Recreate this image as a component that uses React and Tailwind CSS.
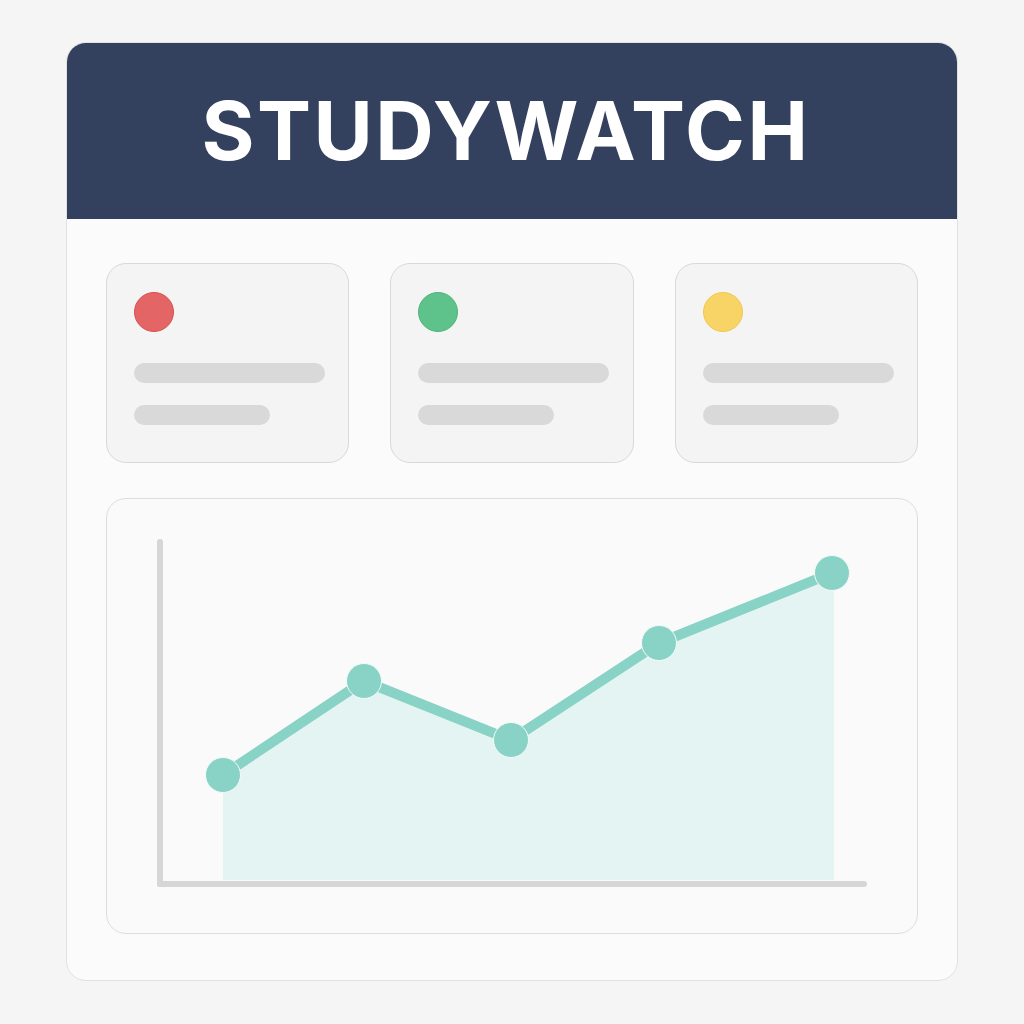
const cards = [
  { dot: 'bg-[#e46565] border-[#d94f4f]' },
  { dot: 'bg-[#5ec28b] border-[#4fb37c]' },
  { dot: 'bg-[#f8d467] border-[#f0c850]' },
];

const points = [
  [117, 277],
  [258, 183],
  [405, 242],
  [553, 145],
  [726, 75],
];

function StatCard({ dot }) {
  return (
    <div className="h-[200px] rounded-[20px] border border-[#d9d9d9] bg-[#f4f4f4] pl-[27px] pt-[28px]">
      <div className={`h-[40px] w-[40px] rounded-full border ${dot}`} />
      <div className="mt-[31px] h-[20px] w-[191px] rounded-full bg-[#d9d9d9]" />
      <div className="mt-[22px] h-[20px] w-[136px] rounded-full bg-[#d9d9d9]" />
    </div>
  );
}

function Chart() {
  const line = points.map((p) => p.join(',')).join(' ');
  const area = `117,382 ${line} 728,75 728,382`;
  return (
    <div className="h-[436px] rounded-[20px] border border-[#dedede] bg-[#fafafa]">
      <svg width="810" height="434" viewBox="1 1 810 434" className="block">
        <polygon points={area} fill="#e4f4f2" />
        <line x1="54" y1="44" x2="54" y2="386" stroke="#d6d6d6" strokeWidth="6" strokeLinecap="round" />
        <line x1="54" y1="386" x2="758" y2="386" stroke="#d6d6d6" strokeWidth="6" strokeLinecap="round" />
        <polyline points={line} fill="none" stroke="#88d3c5" strokeWidth="10" strokeLinejoin="round" />
        {points.map(([x, y], i) => (
          <circle key={i} cx={x} cy={y} r="17.5" fill="#88d3c5" stroke="#f4fbfa" strokeWidth="1" />
        ))}
      </svg>
    </div>
  );
}

export default function App() {
  return (
    <div className="min-h-[1024px] w-[1024px] bg-[#f5f5f5] pt-[42px] pl-[66px]" style={{ fontFamily: 'Inter, "Liberation Sans", sans-serif' }}>
      <div className="h-[939px] w-[892px] overflow-hidden rounded-[20px] border border-[#e2e2e2] bg-[#fbfbfb]">
        <div className="flex h-[176px] items-center justify-center bg-[#33405e] pr-[12px]">
          <h1 className="text-[81px] font-bold leading-none tracking-[2.5px] text-white">STUDYWATCH</h1>
        </div>
        <div className="px-[39px] pt-[44px]">
          <div className="grid grid-cols-3 gap-[41px]">
            {cards.map((c, i) => (
              <StatCard key={i} dot={c.dot} />
            ))}
          </div>
          <div className="mt-[35px]">
            <Chart />
          </div>
        </div>
      </div>
    </div>
  );
}
